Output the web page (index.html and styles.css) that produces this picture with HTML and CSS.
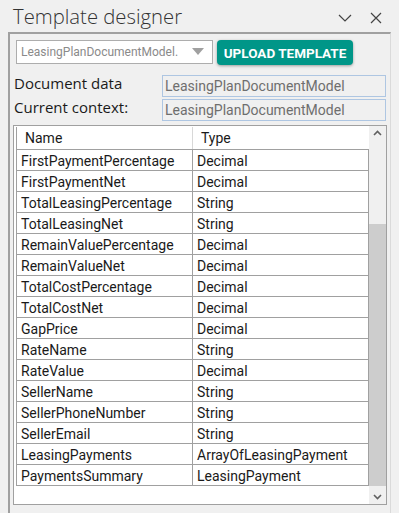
FILE: index.html
```html
<!DOCTYPE html>
<html>
<head>
  <title>Template designer</title>
  <link rel="stylesheet" href="styles.css">
</head>
<body>
  <div class="title-bar">
    <span class="title">Template designer</span>
    <div class="title-actions">
      <svg class="title-icon" width="16" height="16" viewBox="0 0 16 16"><path d="M2 5 L8 11 L14 5" fill="none" stroke="#444" stroke-width="1.2"/></svg>
      <svg class="title-icon" width="16" height="16" viewBox="0 0 16 16"><path d="M3 3 L13 13 M13 3 L3 13" fill="none" stroke="#444" stroke-width="1.2"/></svg>
    </div>
  </div>

  <div class="panel">
    <div class="toolbar">
      <div class="combo">
        <span class="combo-text">LeasingPlanDocumentModel.</span>
        <svg class="combo-arrow" width="12" height="8" viewBox="0 0 12 8"><path d="M0 0 L12 0 L6 7 Z" fill="#a0a0a0"/></svg>
      </div>
      <button class="upload">UPLOAD TEMPLATE</button>
    </div>

    <div class="field-row">
      <label>Document data</label>
      <div class="field">LeasingPlanDocumentModel</div>
    </div>
    <div class="field-row">
      <label>Current context:</label>
      <div class="field">LeasingPlanDocumentModel</div>
    </div>

    <div class="grid-frame">
      <div class="grid-scroll">
        <table class="grid">
          <thead>
            <tr><th>Name</th><th>Type</th></tr>
          </thead>
          <tbody>
            <tr><td>FirstPaymentPercentage</td><td>Decimal</td></tr>
            <tr><td>FirstPaymentNet</td><td>Decimal</td></tr>
            <tr><td>TotalLeasingPercentage</td><td>String</td></tr>
            <tr><td>TotalLeasingNet</td><td>String</td></tr>
            <tr><td>RemainValuePercentage</td><td>Decimal</td></tr>
            <tr><td>RemainValueNet</td><td>Decimal</td></tr>
            <tr><td>TotalCostPercentage</td><td>Decimal</td></tr>
            <tr><td>TotalCostNet</td><td>Decimal</td></tr>
            <tr><td>GapPrice</td><td>Decimal</td></tr>
            <tr><td>RateName</td><td>String</td></tr>
            <tr><td>RateValue</td><td>Decimal</td></tr>
            <tr><td>SellerName</td><td>String</td></tr>
            <tr><td>SellerPhoneNumber</td><td>String</td></tr>
            <tr><td>SellerEmail</td><td>String</td></tr>
            <tr><td>LeasingPayments</td><td>ArrayOfLeasingPayment</td></tr>
            <tr><td>PaymentsSummary</td><td>LeasingPayment</td></tr>
          </tbody>
        </table>
      </div>
      <div class="scrollbar">
        <svg class="scroll-btn" width="17" height="14" viewBox="0 0 17 14"><path d="M5 9 L8.5 5.5 L12 9" fill="none" stroke="#606060" stroke-width="1.6"/></svg>
        <div class="scroll-track">
          <div class="scroll-thumb"></div>
        </div>
        <svg class="scroll-btn" width="17" height="14" viewBox="0 0 17 14"><path d="M5 5 L8.5 8.5 L12 5" fill="none" stroke="#606060" stroke-width="1.6"/></svg>
      </div>
    </div>
  </div>
</body>
</html>
```

FILE: styles.css
```css
body {
  margin: 0;
  width: 399px;
  height: 513px;
  background: #f0f0f0;
  font-family: Roboto, "Liberation Sans", sans-serif;
  color: #1a1a1a;
  overflow: hidden;
}

.title-bar {
  height: 32px;
  display: flex;
  align-items: center;
  justify-content: space-between;
  padding: 0 15px 0 13px;
}

.title {
  font-family: "Open Sans", sans-serif;
  font-weight: 300;
  font-size: 20.3px;
  color: #333;
}

.title-actions {
  display: flex;
  gap: 15px;
  margin-top: 4px;
}

.title-icon {
  display: block;
}

.panel {
  margin-left: 8px;
  width: 383px;
  height: 481px;
  box-sizing: border-box;
  border-top: 2px solid #a0a0a0;
  border-left: 2px solid #a0a0a0;
  border-right: 1px solid #dadada;
  padding: 6px 4px 0 3px;
  display: flex;
  flex-direction: column;
}

.toolbar {
  display: flex;
  gap: 4px;
  height: 25px;
  margin-left: 3px;
}

.combo {
  width: 197px;
  height: 24px;
  box-sizing: border-box;
  border: 1px solid #adadad;
  background: #fff;
  display: flex;
  align-items: center;
  justify-content: space-between;
  padding: 0 8px 0 4px;
}

.combo-text {
  font-size: 12px;
  color: #8a8a8a;
}

.upload {
  width: 136px;
  height: 25px;
  border: none;
  border-radius: 4px;
  background: #009688;
  color: #fff;
  font-family: Roboto, sans-serif;
  font-weight: bold;
  font-size: 13.5px;
  padding: 0;
  box-shadow: 0 1px 3px rgba(0, 0, 0, 0.35);
}

.field-row {
  display: flex;
  align-items: center;
  justify-content: space-between;
  height: 22px;
  margin-top: 2px;
  padding-left: 1px;
}

.toolbar + .field-row {
  margin-top: 10px;
}

.field-row label {
  font-family: "Open Sans", sans-serif;
  font-size: 15px;
  color: #1a1a1a;
  margin-top: -6px;
}

.field {
  width: 224px;
  height: 22px;
  box-sizing: border-box;
  border: 1px solid #aec6e2;
  padding: 0 2px;
  font-size: 14px;
  line-height: 20px;
  color: #6e6e6e;
}

.grid-frame {
  margin-top: 4px;
  width: 374px;
  height: 380px;
  box-sizing: border-box;
  border: 1px solid #a0a0a0;
  background: #fff;
  display: flex;
}

.grid-scroll {
  flex: 1;
  padding: 1px 0 0 2px;
}

.grid {
  border-collapse: collapse;
  width: 353px;
  font-size: 14px;
  border-left: 1px solid #a0a0a0;
}

.grid th {
  font-weight: normal;
  text-align: left;
  height: 22px;
  padding: 0 0 0 8px;
  border-right: 1px solid #d8d8d8;
  border-bottom: 1px solid #a0a0a0;
}

.grid th:last-child {
  border-right: 1px solid #fff;
}

.grid td {
  height: 18px;
  padding: 2px 0 0 4px;
  border: 1px solid #a0a0a0;
  border-top: none;
}

.grid td:first-child {
  width: 171px;
  border-left: none;
}

.scrollbar {
  width: 17px;
  background: #f0f0f0;
  display: flex;
  flex-direction: column;
}

.scroll-btn {
  display: block;
  flex: none;
}

.scroll-track {
  flex: 1;
  padding-top: 84px;
  padding-bottom: 4px;
  display: flex;
}

.scroll-thumb {
  flex: 1;
  background: #cdcdcd;
}
```
